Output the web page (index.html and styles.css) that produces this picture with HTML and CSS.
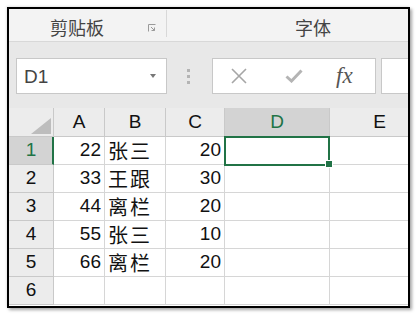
FILE: index.html
```html
<!DOCTYPE html>
<html>
<head>
<meta charset="utf-8">
<link rel="stylesheet" href="styles.css">
</head>
<body>
<div class="frame">
  <div class="ribbon">
    <div class="group g1">
      <span class="glabel">剪贴板</span>
      <svg class="launcher" width="8" height="8" viewBox="0 0 8 8"><path d="M0.5 7.5V0.5H7.5" fill="none" stroke="#9a9a9a" stroke-width="1"/><path d="M3 3L6.5 6.5M6.5 3.5V6.5H3.5" fill="none" stroke="#9a9a9a" stroke-width="1"/></svg>
    </div>
    <div class="sep"></div>
    <div class="group g2"><span class="glabel">字体</span></div>
  </div>
  <div class="fbar">
    <div class="namebox"><span class="nm">D1</span><span class="dd"></span></div>
    <div class="dots"><i></i><i></i><i></i></div>
    <div class="fbtns">
      <svg class="btn-x" width="16" height="16" viewBox="0 0 16 16"><path d="M1 1L15 15M15 1L1 15" stroke="#a6a6a6" stroke-width="1.6"/></svg>
      <svg class="btn-ok" width="18" height="14" viewBox="0 0 18 14"><path d="M1.5 7.5L6.5 12L16.5 1.5" fill="none" stroke="#b4b4b4" stroke-width="3"/></svg>
      <span class="fx">fx</span>
    </div>
    <div class="finput"></div>
  </div>
  <div class="grid">
    <div class="hd corner"><svg width="20" height="16" viewBox="0 0 20 16"><polygon points="20,0 20,16 0,16" fill="#bdbdbd"/></svg></div>
    <div class="hd ch">A</div>
    <div class="hd ch">B</div>
    <div class="hd ch">C</div>
    <div class="hd ch sel">D</div>
    <div class="hd ch">E</div>

    <div class="hd rh rsel">1</div>
    <div class="c num">22</div>
    <div class="c txt">张三</div>
    <div class="c num">20</div>
    <div class="c active"><span class="selbox"></span><span class="handle"></span></div>
    <div class="c"></div>

    <div class="hd rh">2</div>
    <div class="c num">33</div>
    <div class="c txt">王跟</div>
    <div class="c num">30</div>
    <div class="c"></div>
    <div class="c"></div>

    <div class="hd rh">3</div>
    <div class="c num">44</div>
    <div class="c txt">离栏</div>
    <div class="c num">20</div>
    <div class="c"></div>
    <div class="c"></div>

    <div class="hd rh">4</div>
    <div class="c num">55</div>
    <div class="c txt">张三</div>
    <div class="c num">10</div>
    <div class="c"></div>
    <div class="c"></div>

    <div class="hd rh">5</div>
    <div class="c num">66</div>
    <div class="c txt">离栏</div>
    <div class="c num">20</div>
    <div class="c"></div>
    <div class="c"></div>

    <div class="hd rh">6</div>
    <div class="c"></div>
    <div class="c"></div>
    <div class="c"></div>
    <div class="c"></div>
    <div class="c"></div>
  </div>
</div>
</body>
</html>
```
FILE: styles.css
```css
html, body {
  margin: 0;
  padding: 0;
  background: #fff;
}
body {
  font-family: "Liberation Sans", "Noto Sans CJK SC", sans-serif;
}
.frame {
  margin: 7px;
  width: 399px;
  height: 297px;
  border: 2px solid #000;
  box-shadow: 2px 2px 3px rgba(0,0,0,0.35), -1px -1px 2px rgba(0,0,0,0.08);
  overflow: hidden;
  background: #fff;
  display: flex;
  flex-direction: column;
}
.ribbon {
  height: 32px;
  flex: none;
  background: #f3f3f3;
  border-bottom: 1px solid #d8d8d8;
  display: flex;
}
.group {
  display: flex;
  align-items: center;
  padding-top: 4px;
  box-sizing: border-box;
}
.g1 {
  width: 157px;
  padding-left: 41px;
}
.glabel {
  font-family: "Noto Sans CJK SC", sans-serif;
  font-size: 18px;
  color: #444;
  line-height: 20px;
}
.launcher {
  margin-left: 44px;
  margin-top: 2px;
}
.sep {
  width: 1px;
  background: #d8d8d8;
  margin: 1px 0 4px;
}
.g2 {
  flex: 1;
  padding-left: 128px;
}
.fbar {
  height: 66px;
  flex: none;
  background: #e8e8e8;
  display: flex;
  align-items: flex-start;
  padding: 16px 0 0 7px;
  box-sizing: border-box;
}
.namebox {
  width: 151px;
  height: 36px;
  box-sizing: border-box;
  border: 1px solid #c8c8c8;
  background: #fff;
  display: flex;
  align-items: center;
  padding-left: 7px;
}
.nm {
  font-size: 19px;
  color: #444;
  flex: 1;
  margin-top: 1px;
}
.dd {
  width: 0;
  height: 0;
  border-left: 3px solid transparent;
  border-right: 3px solid transparent;
  border-top: 4px solid #777;
  margin-right: 10px;
}
.dots {
  margin-left: 20px;
  width: 4px;
  margin-top: 11px;
  display: flex;
  flex-direction: column;
  gap: 3px;
}
.dots i {
  display: block;
  width: 3px;
  height: 3px;
  background: #b4b4b4;
}
.fbtns {
  margin-left: 21px;
  width: 164px;
  height: 36px;
  box-sizing: border-box;
  border: 1px solid #c8c8c8;
  background: #fff;
  display: flex;
  align-items: center;
}
.btn-x {
  margin-left: 18px;
}
.btn-ok {
  margin-left: 38px;
}
.fx {
  margin-left: 33px;
  font-family: "Liberation Serif", serif;
  font-style: italic;
  font-size: 23px;
  color: #555;
  margin-top: -1px;
}
.finput {
  margin-left: 5px;
  flex: 1;
  height: 36px;
  box-sizing: border-box;
  border: 1px solid #c8c8c8;
  border-right: none;
  background: #fff;
}
.grid {
  display: grid;
  grid-template-columns: 45px 51px 61px 59px 105px 100px;
  grid-template-rows: 29px repeat(6, 28px);
  flex: none;
}
.grid > div {
  box-sizing: border-box;
  border-right: 1px solid #d6d6d6;
  border-bottom: 1px solid #d6d6d6;
  font-size: 19px;
  color: #111;
  display: flex;
  align-items: flex-end;
  padding-bottom: 3px;
  line-height: 22px;
}
.hd {
  background: #ececec;
  justify-content: center;
  color: #222;
}
.grid > .hd {
  border-color: #c9c9c9;
}
.grid > .corner {
  justify-content: flex-end;
  padding: 0 2px 2px 0;
}
.corner svg {
  display: block;
}
.grid > .ch {
  padding-bottom: 3px;
}
.grid > .sel {
  background: #d3d3d3;
  color: #217346;
}
.grid > .rsel {
  background: #d3d3d3;
  color: #217346;
  border-right: 2px solid #217346;
  padding-left: 1px;
}
.num {
  justify-content: flex-end;
  padding-right: 3px;
}
.txt {
  font-family: "Noto Sans CJK SC", sans-serif;
  font-size: 20px !important;
  padding-left: 3px;
  padding-bottom: 2px !important;
  letter-spacing: 2px;
}
.active {
  position: relative;
}
.selbox {
  position: absolute;
  left: -1px;
  top: -1px;
  width: 106px;
  height: 30px;
  box-sizing: border-box;
  border: 2px solid #217346;
}
.handle {
  position: absolute;
  left: 101px;
  top: 24px;
  width: 6px;
  height: 6px;
  background: #217346;
  box-shadow: 0 0 0 1px #fff;
}
```
